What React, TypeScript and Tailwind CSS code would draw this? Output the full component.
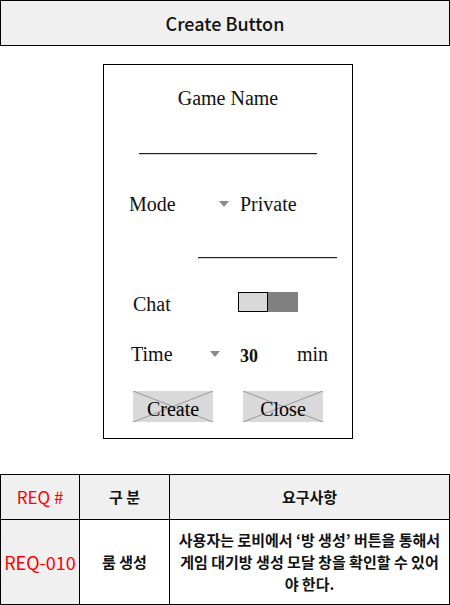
import React from "react";

const serif = { fontFamily: '"Liberation Serif", "Times New Roman", serif' };

const Caret = () => (
  <svg width="10" height="6" viewBox="0 0 10 6" className="shrink-0">
    <polygon points="0,0 10,0 5,6" fill="#8a8a8a" />
  </svg>
);

const XButton = ({ label }: { label: string }) => (
  <div className="relative w-[80px] h-[31px] bg-[#d9d9d9] flex items-end justify-center">
    <svg
      className="absolute inset-0 w-full h-full"
      viewBox="0 0 80 31"
      preserveAspectRatio="none"
    >
      <line x1="0" y1="0" x2="80" y2="31" stroke="#9a9a9a" strokeWidth="1" />
      <line x1="80" y1="0" x2="0" y2="31" stroke="#9a9a9a" strokeWidth="1" />
    </svg>
    <span className="relative text-[20px] leading-[26px] text-black">{label}</span>
  </div>
);

const App = () => {
  return (
    <div className="w-[450px] h-[605px] bg-white overflow-hidden">
      <div
        className="h-[46px] border border-black bg-[#f0f0f0] flex items-center justify-center text-[18px] font-medium text-[#111]"
        style={{ fontFamily: '"Noto Sans CJK KR", "Noto Sans", sans-serif' }}
      >
        Create Button
      </div>

      {/* modal mockup */}
      <div
        className="mt-[18px] ml-[103px] w-[250px] h-[375px] border border-black flex flex-col text-[20px] text-[#111]"
        style={serif}
      >
        <div className="mt-[21px] h-[24px] leading-[24px] text-center">Game Name</div>
        <div className="mt-[43px] ml-[35px] w-[178px] h-px bg-[#222] shadow-[0_1px_0_#d0d0d0]" />

        <div className="mt-[38px] h-[24px] flex items-center">
          <span className="ml-[25px] w-[90px]">Mode</span>
          <Caret />
          <span className="ml-[11px]">Private</span>
        </div>
        <div className="mt-[41px] ml-[94px] w-[139px] h-px bg-[#222] shadow-[0_1px_0_#d0d0d0]" />

        <div className="mt-[34px] h-[24px] flex items-center">
          <span className="ml-[29px] w-[105px]">Chat</span>
          <div className="flex h-[20px] -mt-[4px]">
            <div className="w-[30px] h-[20px] bg-[#d9d9d9] border border-black" />
            <div className="w-[30px] h-[20px] bg-[#808080]" />
          </div>
        </div>

        <div className="mt-[26px] h-[24px] flex items-center">
          <span className="ml-[27px] w-[79px]">Time</span>
          <Caret />
          <span className="ml-[20px] w-[57px] font-bold text-[18px] leading-[18px] pt-[3px]">30</span>
          <span>min</span>
        </div>

        <div className="mt-[25px] flex">
          <div className="ml-[29px]">
            <XButton label="Create" />
          </div>
          <div className="ml-[30px]">
            <XButton label="Close" />
          </div>
        </div>
      </div>

      {/* requirement table */}
      <div
        className="mt-[35px] w-[450px] grid grid-cols-[79px_90px_1fr] border-l border-t border-black"
        style={{ fontFamily: '"Noto Sans CJK KR", "Noto Sans", sans-serif' }}
      >
        <div className="h-[45px] bg-[#f0f0f0] border-r border-b border-black flex items-center justify-center text-[17px] text-[#ff0000]">
          REQ #
        </div>
        <div className="h-[45px] bg-[#f0f0f0] border-r border-b border-black flex items-center justify-center text-[15px] font-bold text-[#111]">
          구 분
        </div>
        <div className="h-[45px] bg-[#f0f0f0] border-r border-b border-black flex items-center justify-center text-[15px] font-bold text-[#111]">
          요구사항
        </div>

        <div className="h-[85px] bg-[#f0f0f0] border-r border-b border-black flex items-center justify-center text-[18px] text-[#ff0000]">
          REQ-010
        </div>
        <div className="h-[85px] border-r border-b border-black flex items-center justify-center text-[15px] font-bold text-[#111]">
          룸 생성
        </div>
        <div className="h-[85px] border-r border-b border-black flex items-center justify-center text-center text-[15px] leading-[22px] font-bold text-[#111]">
          <p>
            사용자는 로비에서 ‘방 생성’ 버튼을 통해서
            <br />
            게임 대기방 생성 모달 창을 확인할 수 있어
            <br />
            야 한다.
          </p>
        </div>
      </div>
    </div>
  );
};

export default App;
